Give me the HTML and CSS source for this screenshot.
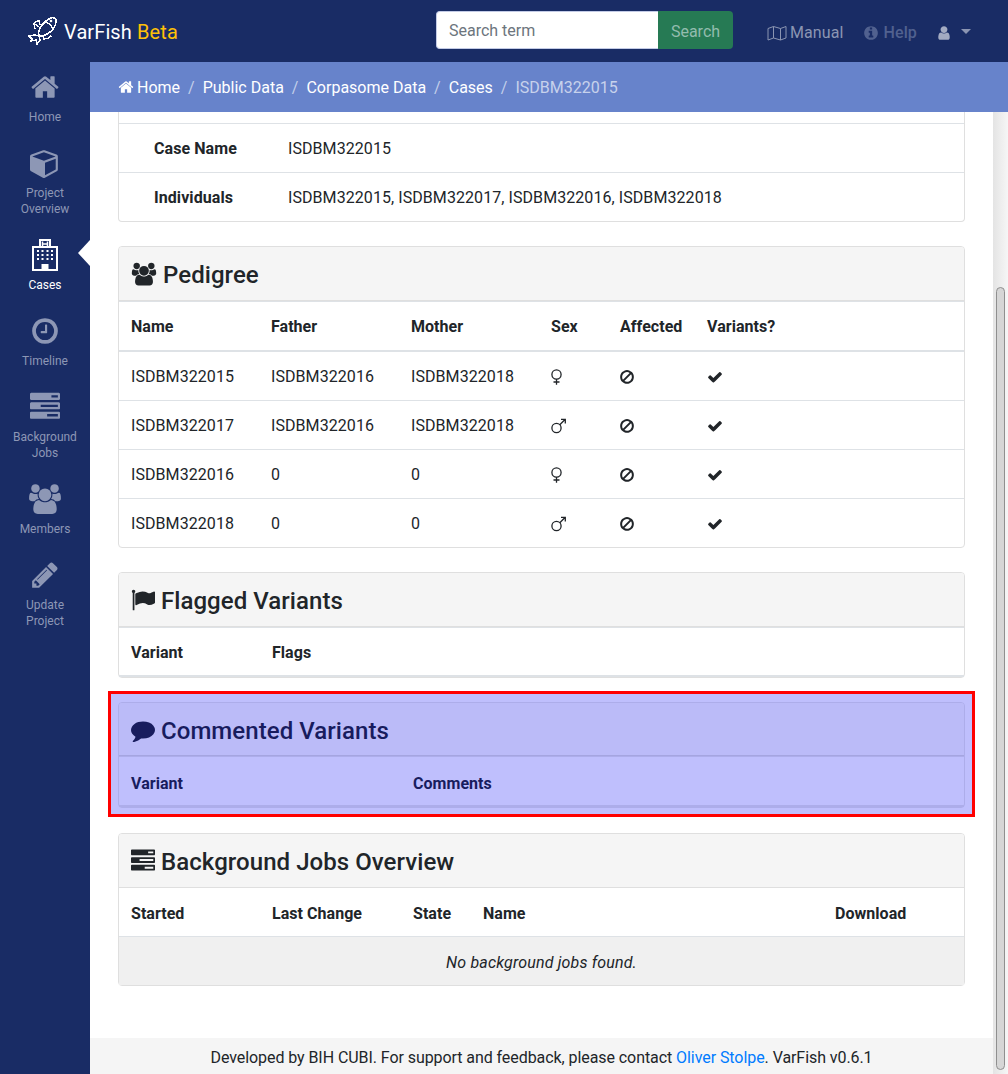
FILE: index.html
```html
<!DOCTYPE html>
<html lang="en">
<head>
    <meta charset="UTF-8">
    <meta name="viewport" content="width=device-width, initial-scale=1.0">
    <title>VarFish Beta</title>
    <link rel="stylesheet" href="styles.css">
</head>
<body>
    <svg class="sprite" xmlns="http://www.w3.org/2000/svg">
        <symbol id="i-home" viewBox="0 0 1792 1792"><path d="M1472 992v480q0 26-19 45t-45 19h-384v-384h-256v384h-384q-26 0-45-19t-19-45v-480q0-1 .5-3t.5-3l575-474 575 474q1 2 1 6zm223-69l-62 74q-8 9-21 11h-3q-13 0-21-7l-692-577-692 577q-12 8-24 7-13-2-21-11l-62-74q-8-10-7-23.500t11-21.500l719-599q32-26 76-26t76 26l244 204v-195q0-14 9-23t23-9h192q14 0 23 9t9 23v408l219 182q10 8 11 21.500t-7 23.500z"/></symbol>
        <symbol id="i-cube" viewBox="0 0 1792 1792"><path d="M896 1629l640-349v-636l-640 233v752zm-64-865l698-254-698-254-698 254zm832-252v768q0 35-18 65t-49 47l-704 384q-28 16-61 16t-61-16l-704-384q-31-17-49-47t-18-65v-768q0-40 23-73t61-47l704-256q22-8 44-8t44 8l704 256q38 14 61 47t23 73z"/></symbol>
        <symbol id="i-hospital" viewBox="0 0 26 32"><path fill="none" stroke="currentColor" stroke-width="2" d="M8 8V1h10v7M1 8h24v23H1z"/><path fill="none" stroke="currentColor" stroke-width="1.500" d="M10.500 2.500v5M15.500 2.500v5M10.500 5h5"/><path d="M5 11h2v2H5zM9.500 11h2v2h-2zM14.500 11h2v2h-2zM19 11h2v2h-2zM5 15h2v2H5zM9.500 15h2v2h-2zM14.500 15h2v2h-2zM19 15h2v2h-2zM5 19h2v2H5zM9.500 19h2v2h-2zM14.500 19h2v2h-2zM19 19h2v2h-2zM9.500 25h7v6h-7z"/></symbol>
        <symbol id="i-clock" viewBox="0 0 1792 1792"><path d="M1024 544v448q0 14-9 23t-23 9h-320q-14 0-23-9t-9-23v-64q0-14 9-23t23-9h224v-352q0-14 9-23t23-9h64q14 0 23 9t9 23zm416 352q0-148-73-273t-198-198-273-73-273 73-198 198-73 273 73 273 198 198 273 73 273-73 198-198 73-273zm224 0q0 209-103 385.500t-279.500 279.500-385.500 103-385.500-103-279.500-279.500-103-385.500 103-385.500 279.500-279.500 385.500-103 385.500 103 279.500 279.500 103 385.500z"/></symbol>
        <symbol id="i-tasks" viewBox="0 0 1792 1792"><path d="M1024 1408h640v-128h-640v128zm-384-512h1024v-128h-1024v128zm640-512h384v-128h-384v128zm512 832v256q0 26-19 45t-45 19h-1664q-26 0-45-19t-19-45v-256q0-26 19-45t45-19h1664q26 0 45 19t19 45zm0-512v256q0 26-19 45t-45 19h-1664q-26 0-45-19t-19-45v-256q0-26 19-45t45-19h1664q26 0 45 19t19 45zm0-512v256q0 26-19 45t-45 19h-1664q-26 0-45-19t-19-45v-256q0-26 19-45t45-19h1664q26 0 45 19t19 45z"/></symbol>
        <symbol id="i-users" viewBox="0 0 2048 1792"><path d="M657 896q-162 5-265 128h-134q-82 0-138-40.500t-56-118.500q0-353 124-353 6 0 43.500 21t97.500 42.500 119 21.500q67 0 133-23-5 37-5 66 0 139 81 256zm1071 637q0 120-73 189.500t-194 69.500h-874q-121 0-194-69.500t-73-189.500q0-53 3.500-103.500t14-109 26.500-108.500 43-97.500 62-81 85.500-53.500 111.500-20q10 0 43 21.500t73 48 107 48 135 21.500 135-21.500 107-48 73-48 43-21.500q61 0 111.500 20t85.500 53.500 62 81 43 97.500 26.500 108.500 14 109 3.500 103.500zm-1024-1277q0 106-75 181t-181 75-181-75-75-181 75-181 181-75 181 75 75 181zm704 384q0 159-112.500 271.500t-271.500 112.500-271.500-112.500-112.500-271.500 112.500-271.500 271.500-112.500 271.500 112.500 112.500 271.500zm576 225q0 78-56 118.500t-138 40.500h-134q-103-123-265-128 81-117 81-256 0-29-5-66 66 23 133 23 59 0 119-21.500t97.500-42.500 43.500-21q124 0 124 353zm-128-609q0 106-75 181t-181 75-181-75-75-181 75-181 181-75 181 75 75 181z"/></symbol>
        <symbol id="i-pencil" viewBox="0 0 1792 1792"><path d="M491 1536l91-91-235-235-91 91v107h128v128h107zm523-928q0-22-22-22-10 0-17 7l-542 542q-7 7-7 17 0 22 22 22 10 0 17-7l542-542q7-7 7-17zm-54-192l416 416-832 832h-416v-416zm683 96q0 53-37 90l-166 166-416-416 166-165q36-38 90-38 53 0 91 38l235 234q37 39 37 91z"/></symbol>
        <symbol id="i-info" viewBox="0 0 1792 1792"><path d="M1152 1376v-160q0-14-9-23t-23-9h-96v-512q0-14-9-23t-23-9h-320q-14 0-23 9t-9 23v160q0 14 9 23t23 9h96v320h-96q-14 0-23 9t-9 23v160q0 14 9 23t23 9h448q14 0 23-9t9-23zm-128-896v-160q0-14-9-23t-23-9h-192q-14 0-23 9t-9 23v160q0 14 9 23t23 9h192q14 0 23-9t9-23zm640 416q0 209-103 385.500t-279.500 279.500-385.500 103-385.500-103-279.500-279.500-103-385.500 103-385.500 279.500-279.500 385.500-103 385.500 103 279.500 279.500 103 385.500z"/></symbol>
        <symbol id="i-user" viewBox="0 0 1792 1792"><path d="M1536 1399q0 109-62.500 187t-150.500 78h-854q-88 0-150.500-78t-62.500-187q0-85 8.500-160.500t31.500-152 58.500-131 94-89 134.500-34.500q131 128 313 128t313-128q76 0 134.500 34.500t94 89 58.500 131 31.500 152 8.500 160.500zm-256-887q0 159-112.500 271.500t-271.500 112.500-271.500-112.500-112.500-271.500 112.500-271.500 271.500-112.500 271.500 112.500 112.500 271.500z"/></symbol>
        <symbol id="i-flag" viewBox="0 0 1792 1792"><path d="M320 256q0 72-64 110v1266q0 13-9.500 22.500t-22.500 9.500h-64q-13 0-22.500-9.500t-9.500-22.500v-1266q-64-38-64-110 0-53 37.500-90.500t90.500-37.500 90.500 37.500 37.500 90.500zm1472 64v763q0 25-12.500 38.500t-39.500 27.500q-215 116-369 116-61 0-123.500-22t-108.500-48-115.500-48-142.500-22q-192 0-464 146-17 9-33 9-26 0-45-19t-19-45v-742q0-32 31-55 21-14 79-43 236-120 421-120 107 0 200 29t219 88q38 19 88 19 54 0 117.500-21t110-47 88-47 54.500-21q26 0 45 19t19 45z"/></symbol>
        <symbol id="i-comment" viewBox="0 0 1792 1792"><path d="M1792 896q0 174-120 321.500t-326 233-450 85.500q-70 0-145-8-198 175-460 242-49 14-114 22-17 2-30.500-9t-17.500-29v-1q-3-4-.5-12t2-10 4.500-9.500l6-9 7-8.500 8-9q7-8 31-34.500t34.500-38 31-39.500 32.500-51 27-59 26-76q-157-89-247.500-220t-90.500-281q0-130 71-248.500t191-204.500 286-136.500 348-50.500q244 0 450 85.500t326 233 120 321.500z"/></symbol>
        <symbol id="i-check" viewBox="0 0 1792 1792"><path d="M1671 566q0 40-28 68l-724 724-136 136q-28 28-68 28t-68-28l-136-136-362-362q-28-28-28-68t28-68l136-136q28-28 68-28t68 28l294 295 656-657q28-28 68-28t68 28l136 136q28 28 28 68z"/></symbol>
        <symbol id="i-ban" viewBox="0 0 1792 1792"><path d="M1440 893q0-161-87-295l-754 753q137 89 297 89 111 0 211.500-43.500t173.500-116.500 116-174.500 43-212.500zm-999 299l755-754q-135-91-300-91-148 0-273 73t-198 199-73 274q0 162 89 299zm1223-299q0 157-61 300t-163.500 246-245 164-298.500 61-298.500-61-245-164-163.500-246-61-300 61-299.500 163.500-245.500 245-164 298.500-61 298.500 61 245 164 163.500 245.500 61 299.500z"/></symbol>
        <symbol id="i-venus" viewBox="0 0 16 16"><g fill="none" stroke="currentColor" stroke-width="1.300"><circle cx="5.500" cy="5.500" r="4.600"/><path d="M5.500 10v5.700M2.500 13h6"/></g></symbol>
        <symbol id="i-mars" viewBox="0 0 16 16"><g fill="none" stroke="currentColor" stroke-width="1.300"><circle cx="5.500" cy="10" r="4.600"/><path d="M8.800 6.700l5.200-5.200M10 1.300h4.300v4.300"/></g></symbol>
        <symbol id="i-map" viewBox="0 0 20 16"><g fill="none" stroke="currentColor" stroke-width="1"><path d="M1 3.500l5.500-2 7 2 5.500-2v11.500l-5.500 2-7-2-5.500 2zM6.500 1.500v11.500M13.500 3.500v11.500"/></g></symbol>
        <symbol id="i-fish" viewBox="0 0 30 30"><g fill="none" stroke="currentColor" stroke-width="1.500" shape-rendering="crispEdges"><path d="M11 20C9 13 16 5 23 2c3-1 6 1 5 4-1 7-8 14-17 14z"/><path d="M11 20l-4-1-6 1 3 3-1 2 5-1 1 4 3-4-1-4"/><path d="M11 11c-2-2-3-3-5-3l1 5M12 9l-1-4c-2 0-4 1-5 3"/><path d="M17 6c4 1 7 4 8 8"/><path d="M23 20c-2 2-4 3-7 3l-1-3"/></g><circle cx="23" cy="5" r="1.300" fill="currentColor"/></symbol>
    </svg>

    <header class="navbar">
        <a class="brand">
            <svg class="brand-logo"><use href="#i-fish"/></svg>
            <span>VarFish <span class="beta">Beta</span></span>
        </a>
        <form class="search">
            <input type="text" class="search-input" placeholder="Search term">
            <button type="button" class="search-btn">Search</button>
        </form>
        <nav class="nav-links">
            <a class="nav-link manual"><svg class="nav-icon map-icon"><use href="#i-map"/></svg>Manual</a>
            <a class="nav-link help"><svg class="nav-icon"><use href="#i-info"/></svg>Help</a>
            <a class="nav-link user"><svg class="nav-icon"><use href="#i-user"/></svg><span class="caret"></span></a>
        </nav>
    </header>

    <div class="layout">
        <aside class="sidebar">
            <a class="side-item"><svg class="side-icon"><use href="#i-home"/></svg><span>Home</span></a>
            <a class="side-item"><svg class="side-icon"><use href="#i-cube"/></svg><span>Project<br>Overview</span></a>
            <a class="side-item active"><svg class="side-icon hospital-icon"><use href="#i-hospital"/></svg><span>Cases</span></a>
            <a class="side-item"><svg class="side-icon"><use href="#i-clock"/></svg><span>Timeline</span></a>
            <a class="side-item"><svg class="side-icon tasks-icon"><use href="#i-tasks"/></svg><span>Background<br>Jobs</span></a>
            <a class="side-item"><svg class="side-icon members-icon"><use href="#i-users"/></svg><span>Members</span></a>
            <a class="side-item"><svg class="side-icon"><use href="#i-pencil"/></svg><span>Update<br>Project</span></a>
        </aside>

        <div class="main">
            <ol class="breadcrumb">
                <li><svg class="crumb-icon"><use href="#i-home"/></svg>Home</li>
                <li>Public Data</li>
                <li>Corpasome Data</li>
                <li>Cases</li>
                <li class="current">ISDBM322015</li>
            </ol>

            <div class="scroll-row">
                <div class="content">
                    <div class="container">
                        <section class="card card-cut">
                            <div class="cut-row"></div>
                            <div class="info-row"><b>Case Name</b><span>ISDBM322015</span></div>
                            <div class="info-row"><b>Individuals</b><span>ISDBM322015, ISDBM322017, ISDBM322016, ISDBM322018</span></div>
                        </section>

                        <section class="card">
                            <h4 class="card-header"><svg class="head-icon users-icon"><use href="#i-users"/></svg>Pedigree</h4>
                            <table class="table pedigree">
                                <thead>
                                    <tr><th>Name</th><th>Father</th><th>Mother</th><th>Sex</th><th>Affected</th><th>Variants?</th></tr>
                                </thead>
                                <tbody>
                                    <tr><td>ISDBM322015</td><td>ISDBM322016</td><td>ISDBM322018</td><td><svg class="cell-icon"><use href="#i-venus"/></svg></td><td><svg class="cell-icon ban-icon"><use href="#i-ban"/></svg></td><td><svg class="cell-icon"><use href="#i-check"/></svg></td></tr>
                                    <tr><td>ISDBM322017</td><td>ISDBM322016</td><td>ISDBM322018</td><td><svg class="cell-icon"><use href="#i-mars"/></svg></td><td><svg class="cell-icon ban-icon"><use href="#i-ban"/></svg></td><td><svg class="cell-icon"><use href="#i-check"/></svg></td></tr>
                                    <tr><td>ISDBM322016</td><td>0</td><td>0</td><td><svg class="cell-icon"><use href="#i-venus"/></svg></td><td><svg class="cell-icon ban-icon"><use href="#i-ban"/></svg></td><td><svg class="cell-icon"><use href="#i-check"/></svg></td></tr>
                                    <tr><td>ISDBM322018</td><td>0</td><td>0</td><td><svg class="cell-icon"><use href="#i-mars"/></svg></td><td><svg class="cell-icon ban-icon"><use href="#i-ban"/></svg></td><td><svg class="cell-icon"><use href="#i-check"/></svg></td></tr>
                                </tbody>
                            </table>
                        </section>

                        <section class="card">
                            <h4 class="card-header"><svg class="head-icon"><use href="#i-flag"/></svg>Flagged Variants</h4>
                            <table class="table flagged">
                                <thead><tr><th>Variant</th><th>Flags</th></tr></thead>
                            </table>
                        </section>

                        <div class="highlight">
                            <section class="card">
                                <h4 class="card-header"><svg class="head-icon"><use href="#i-comment"/></svg>Commented Variants</h4>
                                <table class="table commented">
                                    <thead><tr><th>Variant</th><th>Comments</th></tr></thead>
                                </table>
                            </section>
                        </div>

                        <section class="card">
                            <h4 class="card-header"><svg class="head-icon tasks-head"><use href="#i-tasks"/></svg>Background Jobs Overview</h4>
                            <table class="table jobs">
                                <thead><tr><th>Started</th><th>Last Change</th><th>State</th><th>Name</th><th>Download</th></tr></thead>
                                <tbody><tr><td colspan="5" class="empty">No background jobs found.</td></tr></tbody>
                            </table>
                        </section>
                    </div>

                    <footer class="footer">Developed by BIH CUBI. For support and feedback, please contact <a>Oliver Stolpe</a>. VarFish v0.6.1</footer>
                </div>
                <div class="scrollbar"><div class="thumb"></div></div>
            </div>
        </div>
    </div>
</body>
</html>
```

FILE: styles.css
```css
* {
    box-sizing: border-box;
}

html, body {
    height: 100%;
}

body {
    margin: 0;
    display: flex;
    flex-direction: column;
    overflow: hidden;
    font-family: Roboto, "Liberation Sans", sans-serif;
    font-size: 16px;
    line-height: 24px;
    color: #212529;
    background-color: #fff;
}

.sprite {
    display: none;
}

svg {
    fill: currentColor;
}

/* top bar */
.navbar {
    height: 62px;
    flex: none;
    display: flex;
    align-items: center;
    background-color: #192c65;
}

.brand {
    width: 436px;
    padding-left: 28px;
    display: flex;
    align-items: center;
    gap: 6px;
    font-size: 20px;
    letter-spacing: 0.1px;
    color: #fff;
}

.brand > span {
    padding-top: 1px;
}

.brand-logo {
    width: 30px;
    height: 30px;
}

.beta {
    color: #ffc107;
}

.search {
    display: flex;
    height: 38px;
    margin-bottom: 2px;
}

.search-input {
    width: 222px;
    padding: 9px 12px 7px;
    border: 1px solid #c3cbe6;
    border-right: none;
    border-radius: 4px 0 0 4px;
    background-color: #fff;
    font: inherit;
}

.search-input::placeholder {
    color: #6c757d;
}

.search-btn {
    width: 75px;
    padding: 3px 0 0;
    border: none;
    border-radius: 0 4px 4px 0;
    background-color: #267a54;
    color: #93bcae;
    font: inherit;
}

.nav-links {
    display: flex;
    align-items: center;
    margin-left: 34px;
    padding-top: 3px;
}

.nav-link {
    display: flex;
    align-items: center;
    color: #8b95b2;
    letter-spacing: 0.1px;
}

.nav-icon {
    width: 16px;
    height: 16px;
    margin-right: 4px;
}

.map-icon {
    width: 20px;
    margin-right: 3px;
}

.help {
    margin-left: 19px;
    color: #51618f;
    font-weight: 500;
}

.help .nav-icon {
    margin-right: 5px;
}

.user {
    margin-left: 19px;
    color: #a3abc2;
}

.caret {
    width: 0;
    height: 0;
    margin: 0 0 2px 5px;
    border-top: 5px solid #8b95b2;
    border-left: 5px solid transparent;
    border-right: 5px solid transparent;
}

/* page body */
.layout {
    flex: 1;
    min-height: 0;
    display: flex;
}

.sidebar {
    width: 90px;
    flex: none;
    background-color: #192c65;
}

.side-item {
    position: relative;
    display: flex;
    flex-direction: column;
    align-items: center;
    padding: 10px 0 13px;
    font-size: 12px;
    line-height: 16px;
    text-align: center;
    color: #8d97b5;
}

.side-icon {
    width: 30px;
    height: 30px;
    margin-bottom: 7px;
}

.hospital-icon {
    width: 26px;
    height: 32px;
    margin: -1px 0 6px;
}

.tasks-icon {
    width: 32px;
    transform: scaleY(1.1);
}

.members-icon {
    width: 34px;
}

.side-item.active {
    color: #fff;
}

.side-item.active::after {
    content: "";
    position: absolute;
    right: 0;
    top: 10px;
    border-top: 13px solid transparent;
    border-bottom: 13px solid transparent;
    border-right: 12px solid #fff;
}

.main {
    flex: 1;
    min-width: 0;
    display: flex;
    flex-direction: column;
}

.breadcrumb {
    height: 50px;
    flex: none;
    margin: 0;
    padding: 2px 0 0 28px;
    display: flex;
    align-items: center;
    list-style: none;
    background-color: #6783cb;
    color: #fff;
}

.breadcrumb li + li::before {
    content: "/";
    padding: 0 8px;
    color: #c3cfea;
}

.breadcrumb .current {
    color: #c7d2ec;
}

.crumb-icon {
    width: 16px;
    height: 16px;
    margin-right: 3px;
    vertical-align: -2px;
}

.scroll-row {
    flex: 1;
    min-height: 0;
    display: flex;
}

.content {
    flex: 1;
    min-width: 0;
    display: flex;
    flex-direction: column;
}

.container {
    flex: 1;
    padding: 0 28px;
}

/* cards */
.card {
    margin-bottom: 24px;
    border: 1px solid #dfdfdf;
    border-radius: 4px;
    background-color: #fff;
}

.card-cut {
    border-top: none;
    border-radius: 0 0 4px 4px;
}

.cut-row {
    height: 11px;
}

.info-row {
    display: flex;
    height: 49px;
    padding-top: 2px;
    align-items: center;
    border-top: 1px solid #dee2e6;
    letter-spacing: 0.07px;
}

.info-row b {
    width: 134px;
    margin-left: 35px;
    font-weight: 700;
}

.card-header {
    margin: 0;
    padding: 14px 12px 10px;
    border-bottom: 1px solid #dfdfdf;
    border-radius: 3px 3px 0 0;
    background-color: #f5f5f5;
    font-size: 24px;
    font-weight: 500;
    line-height: 28.8px;
    letter-spacing: 0.06px;
}

.head-icon {
    width: 24px;
    height: 24px;
    margin-right: 6px;
    vertical-align: -3px;
}

.users-icon {
    width: 26px;
}

.tasks-head {
    transform: scaleY(1.12);
}

.table {
    width: 100%;
    border-collapse: collapse;
    table-layout: fixed;
}

th, td {
    padding: 13px 12px 11px;
    text-align: left;
    font-weight: 400;
    border-top: 1px solid #dee2e6;
    letter-spacing: 0.07px;
}

th {
    font-weight: 700;
    border-bottom: 2px solid #dee2e6;
    letter-spacing: 0.04px;
}

.pedigree th:nth-child(1), .pedigree th:nth-child(2), .pedigree th:nth-child(3) {
    width: 140px;
}

.pedigree th:nth-child(4) {
    width: 69px;
}

.pedigree th:nth-child(5) {
    width: 87px;
}

.flagged th {
    padding-bottom: 10px;
}

.flagged th:nth-child(1) {
    width: 141px;
}

.commented th {
    padding: 15px 12px 9px;
}

.commented th:nth-child(1) {
    width: 282px;
}

.jobs th {
    padding: 14px 12px 10px;
    border-top: none;
    border-bottom-width: 1px;
}

.jobs th:nth-child(1), .jobs th:nth-child(2) {
    width: 141px;
}

.jobs th:nth-child(3) {
    width: 70px;
}

.jobs th:nth-child(4) {
    width: 352px;
}

.cell-icon {
    width: 16px;
    height: 16px;
    vertical-align: -3px;
}

.ban-icon {
    margin-left: -1px;
}

.empty {
    padding: 14px 12px 10px;
    text-align: center;
    font-style: italic;
    letter-spacing: 0.16px;
    background-color: #f0f0f0;
}

/* marked section: tinted block with the red frame round it */
.highlight {
    margin: -11px -10px 16px;
    padding: 8px 7px 0;
    border: 3px solid #f00;
    background-color: #bfbffd;
    color: #181c5e;
}

.highlight .card {
    margin-bottom: 6px;
    border-color: #adadea;
    background-color: #bfbffd;
}

.highlight .card-header {
    border-color: #a5a5e0;
    background-color: #bbbbf8;
}

.highlight th {
    border-color: #adadea;
}

.footer {
    height: 36px;
    flex: none;
    padding-top: 3px;
    display: flex;
    align-items: center;
    justify-content: center;
    white-space: pre-wrap;
    letter-spacing: -0.07px;
    background-color: #f5f5f5;
}

.footer a {
    color: #007bff;
}

/* drawn scrollbar, the page itself is cut to the window */
.scrollbar {
    width: 15px;
    flex: none;
    padding: 175px 3px 4px;
    background: linear-gradient(to right, #e4e4e4, #f6f6f6);
}

.thumb {
    height: 100%;
    border: 1px solid #8f8f8f;
    border-radius: 5px;
    background-color: #d6d6d6;
}
```
